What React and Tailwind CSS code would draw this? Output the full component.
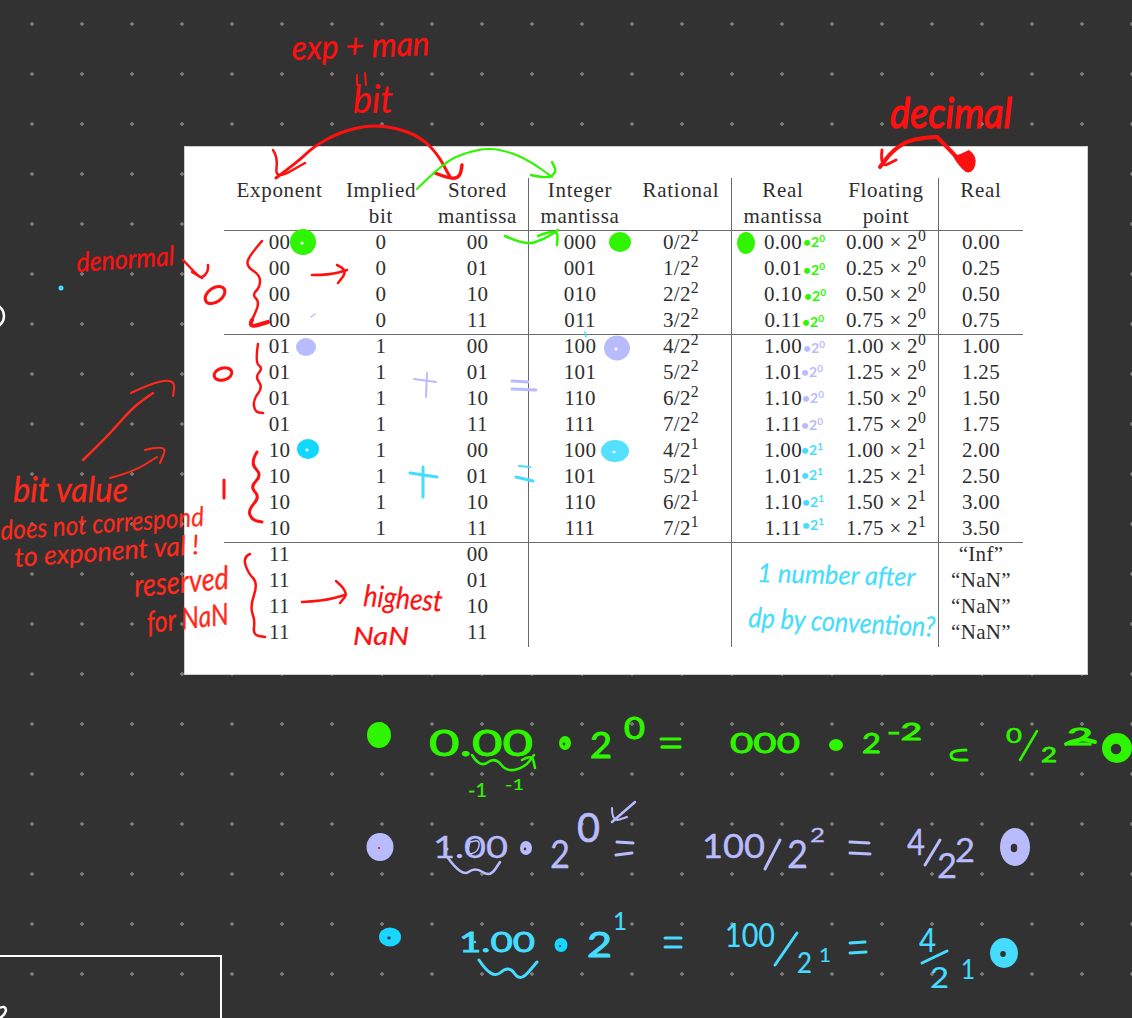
const RED = '#ff1010'
const ORANGE = '#ff2a1c'
const GREEN = '#2ff500'
const LILAC = '#b9bcfc'
const CYAN = '#45dcff'
const DARK = '#323232'

const HEAD_ONE = ['Exponent', 'Implied', 'Stored', 'Integer', 'Rational', 'Real', 'Floating', 'Real']
const HEAD_TWO = ['', 'bit', 'mantissa', 'mantissa', '', 'mantissa', 'point', '']

const BITS = ['00', '01', '10', '11']

const GROUPS = [
  {
    exp: '00',
    implied: '0',
    rows: [
      ['000', '0', 2, '0.00', '0.00', 0, '0.00'],
      ['001', '1', 2, '0.01', '0.25', 0, '0.25'],
      ['010', '2', 2, '0.10', '0.50', 0, '0.50'],
      ['011', '3', 2, '0.11', '0.75', 0, '0.75'],
    ],
  },
  {
    exp: '01',
    implied: '1',
    rows: [
      ['100', '4', 2, '1.00', '1.00', 0, '1.00'],
      ['101', '5', 2, '1.01', '1.25', 0, '1.25'],
      ['110', '6', 2, '1.10', '1.50', 0, '1.50'],
      ['111', '7', 2, '1.11', '1.75', 0, '1.75'],
    ],
  },
  {
    exp: '10',
    implied: '1',
    rows: [
      ['100', '4', 1, '1.00', '1.00', 1, '2.00'],
      ['101', '5', 1, '1.01', '1.25', 1, '2.50'],
      ['110', '6', 1, '1.10', '1.50', 1, '3.00'],
      ['111', '7', 1, '1.11', '1.75', 1, '3.50'],
    ],
  },
]

const SPECIAL = ['“Inf”', '“NaN”', '“NaN”', '“NaN”']

// handwriting that stays real text: text, x, baseline, width, size, colour, rotation, pen weight
const NOTES = [
  ['exp + man', 292, 60, 138, 34, RED, -2, 0.3],
  ['bit', 353, 113, 40, 38, RED, 0, 0.2],
  ['decimal', 890, 128, 122, 42, RED, 0, 1.2],
  ['denormal', 77, 272, 98, 27, RED, -4, 0.3],
  ['bit value', 13, 502, 115, 34, ORANGE, 0, 0.3],
  ['does not correspond', 1, 540, 204, 27, ORANGE, -4, 0.2],
  ['to exponent val !', 15, 567, 185, 27, ORANGE, -4, 0.2],
  ['reserved', 135, 597, 95, 32, ORANGE, -5, 0.3],
  ['for NaN', 148, 633, 82, 30, ORANGE, -6, 0.3],
  ['highest', 363, 606, 79, 30, RED, 4, 0.2],
  ['NaN', 353, 645, 56, 25, RED, 0, 0.2],
  ['1 number after', 757, 582, 158, 26, CYAN, 1.5, 0.2],
  ['dp by convention?', 748, 627, 187, 28, CYAN, 3, 0.2],

  ['0.00', 429, 756, 104, 36, GREEN, 0, 0.8],
  ['2', 590, 758, 22, 36, GREEN, 0, 1],
  ['0', 624, 739, 21, 30, GREEN, 0, 1],
  ['000', 730, 753, 70, 26, GREEN, 0, 0.8],
  ['2', 862, 753, 19, 26, GREEN, 0, 0.8],
  ['-2', 887, 740, 35, 24, GREEN, 0, 1],
  ['0', 1006, 743, 16, 21, GREEN, 0, 0.5],
  ['2', 1041, 762, 16, 21, GREEN, 0, 0.8],
  ['2', 1067, 745, 26, 24, GREEN, 0, 1],
  ['-1', 468, 797, 19, 20, GREEN, 0, 0.2],
  ['-1', 505, 790, 19, 16, GREEN, 0, 0.2],

  ['1.00', 433, 858, 75, 30, LILAC, 0, 0.3],
  ['2', 550, 868, 20, 38, LILAC, 0, 0.3],
  ['0', 577, 842, 23, 40, LILAC, 0, 0.6],
  ['100', 702, 858, 63, 32, LILAC, 0, 0.4],
  ['2', 787, 868, 21, 38, LILAC, 0, 0.3],
  ['2', 810, 842, 15, 20, LILAC, 0, 0.3],
  ['4', 907, 855, 18, 36, LILAC, 0, 0.3],
  ['2', 937, 878, 20, 34, LILAC, 0, 0.3],
  ['2', 955, 862, 20, 32, LILAC, 0, 0.3],

  ['1.00', 459, 952, 76, 27, CYAN, 0, 0.8],
  ['2', 587, 957, 25, 34, CYAN, 0, 1],
  ['1', 613, 930, 14, 25, CYAN, 0, 0.2],
  ['100', 725, 947, 50, 32, CYAN, 0, 0.2],
  ['2', 797, 973, 15, 28, CYAN, 0, 0.2],
  ['1', 819, 962, 12, 19, CYAN, 0, 0.2],
  ['4', 919, 952, 17, 32, CYAN, 0, 0.2],
  ['2', 930, 988, 19, 28, CYAN, 0, 0.2],
  ['1', 961, 979, 14, 26, CYAN, 0, 0.2],
]

// the "·2⁰" written after each real mantissa: x, baseline, colour, exponent
const MINI = [
  [803, 247, GREEN, '0'],
  [803, 275, GREEN, '0'],
  [804, 301, GREEN, '0'],
  [802, 327, GREEN, '0'],
  [803, 353, LILAC, '0'],
  [801, 377, LILAC, '0'],
  [802, 403, LILAC, '0'],
  [801, 430, LILAC, '0'],
  [801, 455, CYAN, '1'],
  [801, 480, CYAN, '1'],
  [802, 507, CYAN, '1'],
  [802, 530, CYAN, '1'],
]

// pen strokes: colour, width, points
const STROKES = [
  // big red arc and its two heads
  [RED, 3, [[276, 178], [300, 160], [313, 147], [340, 132], [370, 125], [397, 128], [420, 137], [437, 153], [450, 177]]],
  [RED, 2.5, [[273, 150], [278, 157], [275, 180], [305, 163]]],
  [RED, 3.5, [[435, 173], [450, 179], [460, 177], [462, 165]]],
  // green arcs
  [GREEN, 2, [[417, 189], [443, 163], [467, 152], [490, 148], [513, 153], [533, 163], [552, 177]]],
  [GREEN, 2.5, [[531, 175], [547, 179], [557, 172], [552, 162]]],
  [GREEN, 2.5, [[505, 236], [525, 245], [543, 240], [558, 230]]],
  [GREEN, 2.5, [[538, 236], [558, 228], [557, 245]]],
  // first brace group
  [RED, 2.5, [[262, 241], [248, 257], [247, 267], [260, 275], [260, 287], [252, 295], [260, 302], [252, 320]]],
  [RED, 4, [[252, 320], [248, 328], [268, 322]]],
  [RED, 2.5, [[312, 275], [330, 275], [347, 270]]],
  [RED, 2.5, [[337, 265], [348, 270], [338, 283]]],
  [RED, 2.5, [[183, 260], [197, 275], [202, 278], [208, 272], [208, 265]]],
  [RED, 2.5, [[192, 272], [202, 278]]],
  // second and third brace
  [RED, 2.5, [[258, 344], [255, 363], [263, 368], [255, 377], [263, 387], [253, 400], [255, 412], [263, 413]]],
  [RED, 3, [[257, 452], [250, 463], [262, 475], [250, 487], [260, 497], [248, 510], [252, 520], [262, 522]]],
  [RED, 3, [[224, 480], [224, 498]]],
  // fourth brace
  [RED, 2.5, [[250, 554], [243, 557], [248, 573], [258, 583], [250, 607], [255, 620], [253, 635], [265, 637]]],
  [RED, 2.5, [[302, 602], [323, 601], [345, 595]]],
  [RED, 2.5, [[336, 581], [349, 592], [340, 603]]],
  [RED, 2, [[357, 75], [357, 85]]],
  [RED, 2, [[365, 73], [366, 85]]],
  // arrows on the dark side
  [ORANGE, 2.5, [[83, 460], [107, 437], [133, 407], [153, 393]]],
  [ORANGE, 2, [[131, 393], [150, 384], [167, 380], [175, 383], [173, 396]]],
  [ORANGE, 2, [[110, 478], [133, 472], [157, 457]]],
  [ORANGE, 2, [[145, 450], [168, 444], [160, 463]]],
  // decimal arrows
  [RED, 4, [[937, 137], [913, 138], [893, 150], [880, 167]]],
  [RED, 3, [[882, 150], [880, 168], [896, 160]]],
  [RED, 4, [[937, 137], [957, 157], [967, 170]]],
  // + and = over the table
  [LILAC, 2, [[414, 379], [436, 382]]],
  [LILAC, 2, [[427, 373], [426, 397]]],
  [LILAC, 3, [[512, 381], [528, 382]]],
  [LILAC, 3, [[512, 389], [536, 390]]],
  [CYAN, 3, [[410, 473], [437, 477]]],
  [CYAN, 3, [[423, 467], [423, 497]]],
  [CYAN, 2, [[519, 466], [530, 467]]],
  [CYAN, 3, [[516, 477], [533, 481]]],
  [LILAC, 1.5, [[311, 317], [315, 314]]],
  // green sum
  [GREEN, 3, [[661, 739], [680, 739]]],
  [GREEN, 3.5, [[662, 747], [680, 747]]],
  [GREEN, 3, [[966, 750], [951, 750], [951, 760], [967, 760]]],
  [GREEN, 2.5, [[472, 755], [480, 768], [495, 757], [507, 772], [525, 767], [534, 755]]],
  [GREEN, 2.5, [[522, 760], [532, 754], [535, 768]]],
  [GREEN, 2.5, [[1037, 731], [1020, 760]]],
  [GREEN, 4, [[1066, 744], [1080, 738], [1095, 742]]],
  // lilac sum
  [LILAC, 2.5, [[448, 858], [462, 877], [475, 867], [490, 877], [500, 862]]],
  [LILAC, 1.5, [[470, 842], [466, 855], [478, 852], [480, 840], [470, 842]]],
  [LILAC, 2.5, [[635, 802], [612, 822]]],
  [LILAC, 2, [[612, 808], [612, 822], [627, 817]]],
  [LILAC, 3, [[617, 842], [633, 843]]],
  [LILAC, 3, [[616, 855], [632, 853]]],
  [LILAC, 3, [[780, 840], [765, 869]]],
  [LILAC, 3, [[850, 842], [869, 843]]],
  [LILAC, 3, [[850, 853], [870, 854]]],
  [LILAC, 3, [[940, 840], [925, 865]]],
  // cyan sum
  [CYAN, 3, [[479, 960], [492, 980], [509, 965], [520, 982], [537, 962]]],
  [CYAN, 3, [[665, 938], [681, 938]]],
  [CYAN, 3, [[665, 947], [681, 947]]],
  [CYAN, 3, [[797, 933], [775, 965]]],
  [CYAN, 3, [[850, 943], [865, 942]]],
  [CYAN, 3, [[850, 953], [866, 952]]],
  [CYAN, 3, [[947, 951], [922, 963]]],
  [CYAN, 1.5, [[585, 332], [586, 337]]],
]

// filled marks: cx, cy, rx, ry, colour, speck colour, speck size
const BLOBS = [
  [303, 242, 13, 13, GREEN, '#ffffff', 0.12],
  [620, 242, 11, 10, GREEN],
  [746, 243, 9, 11, GREEN],
  [306, 347, 10, 9, LILAC],
  [617, 348, 13, 12.5, LILAC, '#ffffff', 0.12],
  [308, 449, 11, 10, '#10d8ff', '#ffffff', 0.14],
  [615, 451, 14, 11, '#55e0ff', '#ffffff', 0.12],
  [379, 735, 12, 13, GREEN],
  [565, 743, 6, 7, GREEN, DARK, 0.2],
  [836, 745, 7, 6, GREEN],
  [1117, 748, 15, 15, GREEN, DARK, 0.35],
  [380, 847, 13.5, 14, LILAC, RED, 0.08],
  [526, 848, 6, 7, LILAC, DARK, 0.2],
  [1015, 847, 15, 19, LILAC, DARK, 0.22],
  [390, 937, 11, 9.5, '#18d6ff', DARK, 0.15],
  [561, 945, 6.5, 7, '#18d6ff', DARK, 0.15],
  [1004, 953, 14, 15, CYAN, DARK, 0.2],
  [61, 288, 2.5, 2.5, CYAN],
  [447, 849, 1.5, 1.5, LILAC],
  [475, 942, 1.2, 1.2, CYAN],
]

// loose rings drawn by hand: cx, cy, rx, ry, rotation
const RINGS = [
  [215, 295, 11, 7, -35],
  [223, 374, 9, 6, -15],
]

function smooth(points) {
  if (points.length < 3) return 'M' + points.map(p => p.join(' ')).join('L')
  let d = `M${points[0][0]} ${points[0][1]}`
  for (let i = 1; i < points.length - 1; i++) {
    const mx = (points[i][0] + points[i + 1][0]) / 2
    const my = (points[i][1] + points[i + 1][1]) / 2
    d += `Q${points[i][0]} ${points[i][1]} ${mx} ${my}`
  }
  const last = points[points.length - 1]
  return d + `L${last[0]} ${last[1]}`
}

function Sup({ base, exp }) {
  return (
    <>
      {base}
      <sup>{exp}</sup>
    </>
  )
}

function Cell({ line, head, children }) {
  return (
    <td className={`p-0 text-center align-top ${head ? 'leading-[24px]' : 'leading-[22px]'} ${line ? 'border-r border-[#6a6a6a]' : ''}`}>
      {children}
    </td>
  )
}

function BitRow({ exp, implied, stored, row, ruled }) {
  const [integer, num, pow, mantissa, fl, flPow, real] = row
  return (
    <tr className={`h-[26px] ${ruled ? '[&>td]:border-b [&>td]:border-b-[#6a6a6a]' : ''}`}>
      <Cell>{exp}</Cell>
      <Cell>{implied}</Cell>
      <Cell line>{stored}</Cell>
      <Cell>{integer}</Cell>
      <Cell line>
        {num}/<Sup base="2" exp={pow} />
      </Cell>
      <Cell>{mantissa}</Cell>
      <Cell line>
        {fl} × <Sup base="2" exp={flPow} />
      </Cell>
      <Cell>{real}</Cell>
    </tr>
  )
}

function Table() {
  return (
    <table className="w-[799px] table-fixed border-separate border-spacing-0 font-['Liberation_Serif',serif] text-[21px] tracking-[0.3px] text-[#2e2e2e]">
      <colgroup>
        <col className="w-[111px]" />
        <col className="w-[92px]" />
        <col className="w-[102px]" />
        <col className="w-[102px]" />
        <col className="w-[101px]" />
        <col className="w-[102px]" />
        <col className="w-[105px]" />
        <col className="w-[84px]" />
      </colgroup>
      <thead className="tracking-[0.7px]">
        <tr className="h-[26px]">
          {HEAD_ONE.map((label, i) => (
            <Cell key={i} head line={i === 2 || i === 4 || i === 6}>{label}</Cell>
          ))}
        </tr>
        <tr className="h-[27px] [&>td]:border-b [&>td]:border-b-[#6a6a6a]">
          {HEAD_TWO.map((label, i) => (
            <Cell key={i} head line={i === 2 || i === 4 || i === 6}>{label}</Cell>
          ))}
        </tr>
      </thead>
      <tbody>
        {GROUPS.map((group, g) =>
          group.rows.map((row, i) => (
            <BitRow
              key={`${g}-${i}`}
              exp={group.exp}
              implied={group.implied}
              stored={BITS[i]}
              row={row}
              ruled={i === 3 && g !== 1}
            />
          ))
        )}
        {SPECIAL.map((label, i) => (
          <tr key={i} className="h-[26px]">
            <Cell>11</Cell>
            <Cell />
            <Cell line>{BITS[i]}</Cell>
            <Cell />
            <Cell line />
            <Cell />
            <Cell line />
            <Cell>{label}</Cell>
          </tr>
        ))}
      </tbody>
    </table>
  )
}

function Ink() {
  return (
    <svg
      className="absolute inset-0 pointer-events-none font-['Lato',sans-serif]"
      width="1132"
      height="1018"
      viewBox="0 0 1132 1018"
    >
      {RINGS.map(([cx, cy, rx, ry, rot], i) => (
        <ellipse
          key={i}
          cx={cx}
          cy={cy}
          rx={rx}
          ry={ry}
          fill="none"
          stroke={RED}
          strokeWidth="3"
          transform={`rotate(${rot} ${cx} ${cy})`}
        />
      ))}
      {STROKES.map(([color, width, points], i) => (
        <path
          key={i}
          d={smooth(points)}
          fill="none"
          stroke={color}
          strokeWidth={width}
          strokeLinecap="round"
          strokeLinejoin="round"
        />
      ))}
      <path d="M953 156 Q962 154 969 150 Q978 156 975 166 Q972 174 966 172 Q958 166 953 156 Z" fill={RED} />
      {BLOBS.map(([cx, cy, rx, ry, color, speck, size], i) => (
        <g key={i}>
          <ellipse cx={cx} cy={cy} rx={rx} ry={ry} fill={color} />
          {speck && <ellipse cx={cx - 1} cy={cy + 1} rx={rx * size} ry={ry * size} fill={speck} />}
        </g>
      ))}
      {NOTES.map(([text, x, y, w, size, color, rot, pen], i) => (
        <text
          key={i}
          x={x}
          y={y}
          fontSize={size}
          fill={color}
          stroke={color}
          strokeWidth={pen}
          textLength={w}
          lengthAdjust="spacingAndGlyphs"
          className={/^[-\d.]+$/.test(text) ? '' : 'italic'}
          transform={rot ? `rotate(${rot} ${x} ${y})` : undefined}
        >
          {text}
        </text>
      ))}
      {MINI.map(([x, y, color, exp], i) => (
        <text key={i} x={x} y={y} fontSize="14" fontWeight="700" fill={color}>
          •2
          <tspan dy="-5" fontSize="10">{exp}</tspan>
        </text>
      ))}
      <circle cx="-8" cy="316" r="12" fill="none" stroke="#ffffff" strokeWidth="2.5" />
      <path d="M0 1008 Q5 1005 6 1010 Q5 1015 0 1018" fill="none" stroke="#ffffff" strokeWidth="2.5" />
    </svg>
  )
}

export default function App() {
  return (
    <div className="relative w-[1132px] h-[1018px] overflow-hidden bg-[#323232] bg-[radial-gradient(circle,#7a7a7a_1.5px,transparent_2px)] bg-size-[50px_50px] bg-position-[7px_-1px]">
      <div className="absolute left-[184px] top-[146px] w-[904px] h-[529px] bg-white border border-[#cfcfcf] pl-[39px] pt-[31px]">
        <Table />
      </div>

      {/* frame of the next pasted picture, cut off by the window */}
      <div className="absolute left-0 top-[955px] w-[222px] h-[80px] border-t-2 border-r-2 border-white" />

      <Ink />
    </div>
  )
}
